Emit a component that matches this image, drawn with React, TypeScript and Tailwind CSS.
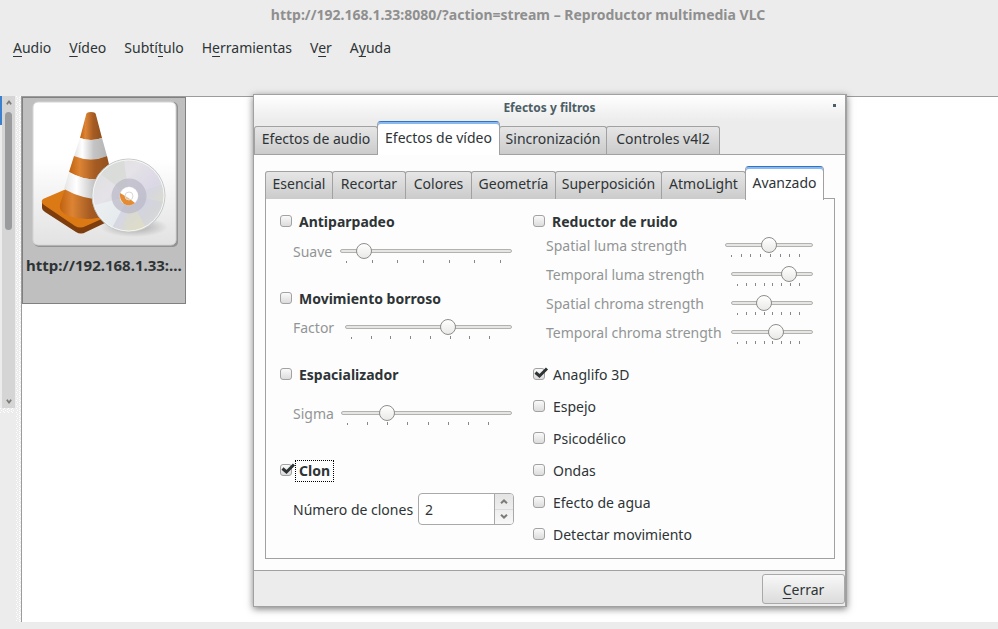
import React from "react";

type MnemonicProps = { text: string; at: number };

function Mnemonic({ text, at }: MnemonicProps) {
  return (
    <>
      {text.slice(0, at)}
      <span className="underline decoration-1 underline-offset-[3px]">{text[at]}</span>
      {text.slice(at + 1)}
    </>
  );
}

const menus = [
  { text: "Audio", at: 0 },
  { text: "Vídeo", at: 0 },
  { text: "Subtítulo", at: 5 },
  { text: "Herramientas", at: 1 },
  { text: "Ver", at: 1 },
  { text: "Ayuda", at: 1 },
];

function ChevronUp({ size = 8 }: { size?: number }) {
  return (
    <svg width={size} height="5" viewBox="0 0 8 5" preserveAspectRatio="none" fill="none" stroke="#7d7d78" strokeWidth="2">
      <path d="M1 4.2 L4 1.4 L7 4.2" />
    </svg>
  );
}

function ChevronDown({ size = 8 }: { size?: number }) {
  return (
    <svg width={size} height="5" viewBox="0 0 8 5" preserveAspectRatio="none" fill="none" stroke="#7d7d78" strokeWidth="2">
      <path d="M1 0.8 L4 3.6 L7 0.8" />
    </svg>
  );
}

function Dither({ id, className }: { id: string; className: string }) {
  return (
    <svg className={className} aria-hidden="true">
      <defs>
        <pattern id={id} width="4" height="4" patternUnits="userSpaceOnUse">
          <rect x="0" y="0" width="1" height="1" fill="#fff" />
          <rect x="3" y="1" width="1" height="1" fill="#fff" />
          <rect x="1" y="2" width="1" height="1" fill="#fff" />
          <rect x="3" y="3" width="1" height="1" fill="#fff" />
        </pattern>
      </defs>
      <rect width="100%" height="100%" fill={`url(#${id})`} />
    </svg>
  );
}

function VlcArt() {
  return (
    <svg className="ml-[2px]" width="146" height="146" viewBox="0 0 146 146" role="img" aria-label="VLC">
      <defs>
        <linearGradient id="card" x1="0" y1="0" x2="0" y2="1">
          <stop offset="0.4" stopColor="#fff" />
          <stop offset="1" stopColor="#e2e2e2" />
        </linearGradient>
        <linearGradient id="orange" x1="0" y1="0" x2="1" y2="0">
          <stop offset="0" stopColor="#c0620f" />
          <stop offset="0.25" stopColor="#dd8434" />
          <stop offset="0.6" stopColor="#a65c22" />
          <stop offset="1" stopColor="#8f4f1d" />
        </linearGradient>
        <linearGradient id="white" x1="0" y1="0" x2="1" y2="0">
          <stop offset="0" stopColor="#e4e4e4" />
          <stop offset="0.25" stopColor="#fff" />
          <stop offset="0.6" stopColor="#c4c4c4" />
          <stop offset="1" stopColor="#b4b4b4" />
        </linearGradient>
        <linearGradient id="disc" x1="0" y1="0" x2="1" y2="1">
          <stop offset="0" stopColor="#d9dcda" />
          <stop offset="0.35" stopColor="#e6e3e8" />
          <stop offset="0.6" stopColor="#d5d6e2" />
          <stop offset="0.8" stopColor="#dcdccf" />
          <stop offset="1" stopColor="#eef0f0" />
        </linearGradient>
        <radialGradient id="shade">
          <stop offset="0" stopColor="#777" stopOpacity="0.6" />
          <stop offset="1" stopColor="#777" stopOpacity="0" />
        </radialGradient>
      </defs>
      <rect x="2" y="1" width="144" height="145" rx="5" fill="#929292" />
      <rect x="1" y="1" width="143" height="143" rx="5" fill="url(#card)" stroke="#d4d4d4" />
      <ellipse cx="102" cy="126" rx="34" ry="10" fill="url(#shade)" />
      <path d="M10 101 L10 107 Q10 109 13 111 L44 131 Q49 134 54 131 L92 113 L92 106 Z" fill="#7d3d0c" />
      <path d="M11 98 L32 89 L72 98 L92 108 L54 125 Q48 128 43 125 L12 104 Q8 101 11 98 Z" fill="#db7915" />
      <path d="M33 88 L28 103 Q26 111 37 115 Q57 122 78 113 L78 90 Z" fill="url(#orange)" />
      <path d="M54 14 Q54 11 59 11 Q64 11 64 14 L70 37 Q59 41 48 37 Z" fill="url(#orange)" />
      <path d="M48 37 Q59 41 70 37 L75 55 Q59 62 42 55 Z" fill="url(#white)" />
      <path d="M42 55 Q59 62 75 55 L80 76 Q58 83 37 71 Z" fill="url(#orange)" />
      <path d="M37 71 Q58 83 80 76 L82 98 Q55 101 32 88 Z" fill="url(#white)" />
      <circle cx="96.500" cy="94.500" r="36.500" fill="url(#disc)" stroke="#c6cac8" />
      <path d="M97 95 L118 66 Q127 72 131 83 Z" fill="#e8dcea" opacity="0.35" />
      <path d="M97 95 L69 73 Q78 61 92 60 Z" fill="#d3d8d2" opacity="0.6" />
      <path d="M97 95 L132 101 Q129 117 114 127 Z" fill="#c8cce9" opacity="0.35" />
      <path d="M97 95 L114 127 Q103 132 92 130 Z" fill="#e1ddb8" opacity="0.3" />
      <path d="M97 95 L63 104 Q67 119 80 127 Z" fill="#edf3f3" opacity="0.7" />
      <circle cx="96.500" cy="94.500" r="35.500" fill="none" stroke="#f3f6f5" strokeWidth="1" />
      <circle cx="97" cy="95" r="13.500" fill="none" stroke="#b9b8c6" strokeWidth="8" opacity="0.7" />
      <circle cx="97" cy="95" r="9" fill="#fff" />
      <path d="M88 92 Q96 96 103 102 Q98 106 92 103 Q87 98 88 92 Z" fill="#e58b31" />
      <circle cx="97" cy="95" r="4" fill="#fff" fillOpacity="0.4" stroke="#d9d9d9" />
    </svg>
  );
}

function Check({
  label,
  bold = false,
  checked = false,
  focused = false,
}: {
  label: string;
  bold?: boolean;
  checked?: boolean;
  focused?: boolean;
}) {
  return (
    <label className={bold ? "flex h-[22px] items-center font-bold" : "flex h-8 items-center"}>
      <span className="relative mb-px size-3 shrink-0">
        <input
          type="checkbox"
          defaultChecked={checked}
          className="peer block size-3 appearance-none rounded-[3px] border border-[#a2a2a2] bg-linear-to-b from-[#fafafa] to-[#dcdcdc]"
        />
        <svg
          className="pointer-events-none absolute -top-px left-px hidden peer-checked:block"
          width="15"
          height="12"
          viewBox="0 0 15 12"
          fill="none"
          stroke="#2e3436"
          strokeWidth="3"
        >
          <path d="M1.500 5.500 L5.500 9 L13 1.500" />
        </svg>
      </span>
      <span
        className={
          focused
            ? "mt-[2px] ml-[3px] border border-dotted border-black px-[3px] leading-5"
            : bold
              ? "mt-[2px] ml-[7px] leading-5"
              : "mt-[2px] ml-2 leading-5"
        }
      >
        {label}
      </span>
    </label>
  );
}

function Slider({
  id,
  label,
  value,
  ticks,
  width,
  ticksWidth,
}: {
  id: string;
  label: string;
  value: number;
  ticks: number;
  width: string;
  ticksWidth: string;
}) {
  return (
    <div className="flex items-start justify-between leading-5 text-[#929595]">
      <label htmlFor={id} className="whitespace-nowrap">
        {label}
      </label>
      <div className={`${width} shrink-0 pt-px`}>
        <input
          id={id}
          type="range"
          min={0}
          max={100}
          defaultValue={value}
          className="block h-4 w-full appearance-none bg-transparent [&::-webkit-slider-runnable-track]:h-1 [&::-webkit-slider-runnable-track]:rounded-full [&::-webkit-slider-runnable-track]:border [&::-webkit-slider-runnable-track]:border-[#b2b2ae] [&::-webkit-slider-runnable-track]:bg-[#e6e6e4] [&::-webkit-slider-thumb]:-mt-[7px] [&::-webkit-slider-thumb]:size-4 [&::-webkit-slider-thumb]:appearance-none [&::-webkit-slider-thumb]:rounded-full [&::-webkit-slider-thumb]:border [&::-webkit-slider-thumb]:border-[#8d8d89] [&::-webkit-slider-thumb]:bg-linear-to-b [&::-webkit-slider-thumb]:from-white [&::-webkit-slider-thumb]:to-[#e9e9e7]"
        />
        <div className={`${ticksWidth} mt-px ml-[6px] flex h-[3px] justify-between`}>
          {Array.from({ length: ticks }, (_, i) => (
            <span key={i} className={i === 0 ? "mt-px w-px bg-[#888]" : "w-px bg-[#888]"} />
          ))}
        </div>
      </div>
    </div>
  );
}

function Tab({ label, width, active = false }: { label: string; width: string; active?: boolean }) {
  return (
    <button
      type="button"
      role="tab"
      aria-selected={active}
      className={
        active
          ? `${width} z-10 -mb-px -ml-px h-[34px] shrink-0 rounded-t-[4px] border border-b-0 border-[#a1a1a1] border-t-[#2f75c4] bg-white pb-[3px] whitespace-nowrap shadow-[inset_0_2px_0_#8ab8f0]`
          : `${width} -ml-px h-7 shrink-0 rounded-t-[3px] border border-b-0 border-[#a1a1a1] bg-linear-to-b from-[#e6e6e6] to-[#cbcbcb] pb-1 whitespace-nowrap`
      }
    >
      {label}
    </button>
  );
}

const effects = ["Espejo", "Psicodélico", "Ondas", "Efecto de agua", "Detectar movimiento"];

function AdvancedPanel() {
  return (
    <div className="-mt-px flex justify-between border border-[#a1a1a1] bg-[#fdfdfd] pt-[11px] pr-[21px] pb-2 pl-[14px]">
      <div className="w-[234px]">
        <Check label="Antiparpadeo" bold />
        <div className="mt-[10px] mb-6 pr-[2px] pl-[13px]">
          <Slider id="suave" label="Suave" value={10} ticks={7} width="w-[172px]" ticksWidth="w-[155px]" />
        </div>
        <Check label="Movimiento borroso" bold />
        <div className="mt-[9px] mb-6 pr-[2px] pl-[13px]">
          <Slider id="factor" label="Factor" value={63} ticks={8} width="w-[167px]" ticksWidth="w-[139px]" />
        </div>
        <Check label="Espacializador" bold />
        <div className="mt-[19px] mb-[34px] pr-[2px] pl-[13px]">
          <Slider id="sigma" label="Sigma" value={24} ticks={8} width="w-[171px]" ticksWidth="w-[142px]" />
        </div>
        <Check label="Clon" bold checked focused />
        <div className="mt-3 flex items-center justify-between pl-[13px]">
          <label htmlFor="clones">Número de clones</label>
          <div className="flex h-8 w-24 overflow-hidden rounded-[4px] border border-[#a9a9a9] bg-white">
            <input
              id="clones"
              type="text"
              inputMode="numeric"
              defaultValue="2"
              className="w-0 flex-1 rounded-[3px] px-[6px] outline-none"
            />
            <div className="flex w-[19px] flex-col border-l border-[#a9a9a9] bg-linear-to-b from-[#e4e4e4] to-[#f8f8f8]">
              <button type="button" aria-label="Aumentar" className="flex flex-1 items-center justify-center border-b border-[#dcdcdc]">
                <ChevronUp />
              </button>
              <button type="button" aria-label="Disminuir" className="flex flex-1 items-center justify-center">
                <ChevronDown />
              </button>
            </div>
          </div>
        </div>
      </div>
      <div className="w-[280px]">
        <Check label="Reductor de ruido" bold />
        <div className="mt-1 mb-[14px] flex flex-col gap-2 pl-[13px]">
          <Slider id="sl" label="Spatial luma strength" value={50} ticks={8} width="w-[88px]" ticksWidth="w-[69px]" />
          <Slider id="tl" label="Temporal luma strength" value={76} ticks={8} width="w-[82px]" ticksWidth="w-[63px]" />
          <Slider id="sc" label="Spatial chroma strength" value={38} ticks={8} width="w-[82px]" ticksWidth="w-[63px]" />
          <Slider id="tc" label="Temporal chroma strength" value={56} ticks={8} width="w-[82px]" ticksWidth="w-[63px]" />
        </div>
        <Check label="Anaglifo 3D" checked />
        {effects.map((effect) => (
          <Check key={effect} label={effect} />
        ))}
      </div>
    </div>
  );
}

function EffectsDialog() {
  return (
    <section
      role="dialog"
      aria-label="Efectos y filtros"
      className="absolute top-[94px] left-[253px] w-[594px] border border-r-2 border-[#a1a1a1] bg-[#ececec] shadow-[0_2px_7px_rgba(0,0,0,0.5)]"
    >
      <header className="relative h-[26px] bg-linear-to-b from-white to-[#ececec] text-center text-[12px] leading-[26px] font-bold text-[#4c5e65]">
        Efectos y filtros
        <button type="button" aria-label="Cerrar ventana" className="absolute top-[9px] right-[9px] size-[3px] bg-[#4c5e65]" />
      </header>
      <div role="tablist" className="flex items-end pl-px">
        <Tab label="Efectos de audio" width="w-[124px]" />
        <Tab label="Efectos de vídeo" width="w-[123px]" active />
        <Tab label="Sincronización" width="w-[108px]" />
        <Tab label="Controles v4l2" width="w-[114px]" />
      </div>
      <div className="border-y border-[#a1a1a1] bg-[#fdfdfd] pt-[11px] pr-[10px] pb-[11px] pl-[11px]">
        <div role="tablist" className="flex items-end pl-px">
          <Tab label="Esencial" width="w-[68px]" />
          <Tab label="Recortar" width="w-[74px]" />
          <Tab label="Colores" width="w-[67px]" />
          <Tab label="Geometría" width="w-[85px]" />
          <Tab label="Superposición" width="w-[107px]" />
          <Tab label="AtmoLight" width="w-[85px]" />
          <Tab label="Avanzado" width="w-[79px]" active />
        </div>
        <AdvancedPanel />
      </div>
      <footer className="flex justify-end pt-[3px] pb-[2px]">
        <button
          type="button"
          className="h-[30px] w-[83px] rounded-[3px] border border-[#a9a9a9] bg-linear-to-b from-[#f8f8f8] to-[#dcdcdc]"
        >
          <Mnemonic text="Cerrar" at={0} />
        </button>
      </footer>
    </section>
  );
}

export default function App() {
  return (
    <div className="relative flex h-screen min-h-[629px] flex-col overflow-hidden bg-[#ececec] pb-[7px] font-['Noto_Sans','Open_Sans',sans-serif] text-[14px] text-[#2e3436]">
      <h1 className="h-[30px] pl-[38px] text-center leading-[30px] font-bold text-[#8f8f8f]">
        http://192.168.1.33:8080/?action=stream – Reproductor multimedia VLC
      </h1>
      <nav className="flex h-[66px] gap-[18px] px-[13px] pt-2 leading-5">
        {menus.map((menu) => (
          <button key={menu.text} type="button" className="h-5">
            <Mnemonic text={menu.text} at={menu.at} />
          </button>
        ))}
      </nav>
      <div className="flex flex-1">
        <aside className="flex w-[15px] flex-col">
          <div className="flex h-[312px]">
            <div className="h-[29px] w-[2px] bg-[#3a80cf]" />
            <div className="flex flex-1 flex-col items-center justify-between bg-[#d5d5d5] py-1">
              <div className="flex flex-col items-center gap-[7px]">
                <ChevronUp size={6} />
                <div className="h-[118px] w-[7px] rounded-full bg-[#999b9d]" />
              </div>
              <ChevronDown size={6} />
            </div>
          </div>
          <Dither id="dots-h" className="h-[5px] w-[15px]" />
        </aside>
        <Dither id="dots-v" className="ml-px h-full w-[5px]" />
        <main className="flex-1 border-t border-l border-[#9c9c9c] bg-white">
          <figure className="flex h-[207px] w-[164px] flex-col items-center border border-[#808080] bg-[#bfbfbf] pt-[3px]">
            <VlcArt />
            <figcaption className="mt-2 text-[15px] leading-5 font-bold whitespace-nowrap">http://192.168.1.33:…</figcaption>
          </figure>
        </main>
      </div>
      <EffectsDialog />
    </div>
  );
}
